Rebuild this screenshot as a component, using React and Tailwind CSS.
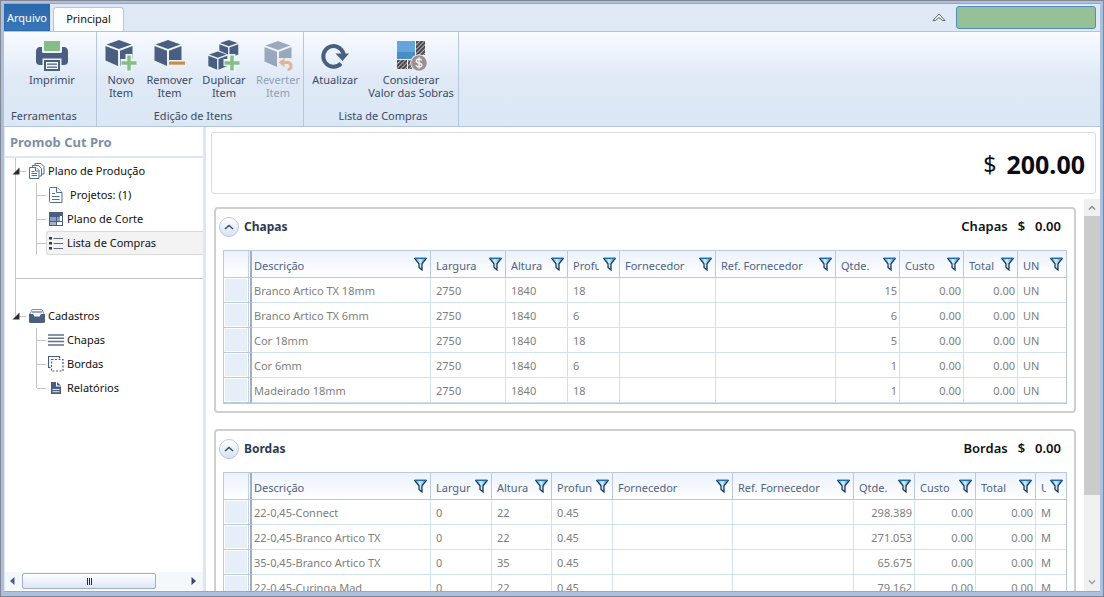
import React from "react";

const NAVY = "#4a5f80";
const GREEN = "#86bd86";

function Cube({ x = 0, y = 0, s = 1 }) {
  return (
    <g transform={`translate(${x} ${y}) scale(${s})`} fill={NAVY}>
      <path d="M14 0 L26.5 4.4 L14 9 L1.5 4.4Z" />
      <path d="M0.5 6 L13 10.8 V26 L0.5 20.6Z" />
      <path d="M27.5 6 L15 10.8 V26 L27.5 20.6Z" />
    </g>
  );
}

function Plus() {
  return (
    <g>
      <path d="M20.5 14h7v5h5v7h-5v6h-7v-6h-5v-7h5z" fill="#eef3fa" />
      <path d="M22.3 15.5h3.4v5.8h5.8v3.4h-5.8v5.8h-3.4v-5.8h-5.8v-3.4h5.8z" fill={GREEN} />
    </g>
  );
}

const svgProps = { width: 32, height: 32, viewBox: "0 0 32 32", "aria-hidden": true };

const PrinterIcon = () => (
  <svg {...svgProps}>
    <rect x="8" y="1" width="16" height="10" fill={GREEN} />
    <path d="M3 7h3v4.5q0 1.5 1.5 1.5h17q1.5 0 1.5-1.5V7h3q3 1 3 5v9q0 4-4 4h-2.500v-6.500H6.500V25H4q-4 0-4-4v-9q0-4 3-5z" fill={NAVY} />
    <path d="M9 21h14v9H9z" fill="#f3f7fc" stroke={NAVY} strokeWidth="2" />
    <path d="M11 24.200h10M11 27.200h10" stroke={NAVY} strokeWidth="1.200" />
  </svg>
);

const NewIcon = () => (
  <svg {...svgProps}>
    <Cube />
    <Plus />
  </svg>
);

const RemoveIcon = () => (
  <svg {...svgProps}>
    <Cube />
    <path d="M13 20h19v7H13z" fill="#e9f0f9" />
    <path d="M15 21.500h16v3.200H15z" fill="#c98f45" />
  </svg>
);

const DuplicateIcon = () => (
  <svg {...svgProps}>
    <Cube x={11} y={0} s={0.7} />
    <path d="M0 15 L10 10 L21 15 V30 H0z" fill="#eaf1f9" />
    <Cube x={0} y={11.500} s={0.7} />
    <Plus />
  </svg>
);

const RevertIcon = () => (
  <svg {...svgProps}>
    <g opacity="0.5">
      <Cube x={2} y={1} />
    </g>
    <path d="M17 18h14v13H17z" fill="#e3ebf6" />
    <path d="M20 22.500h5.500a3.600 3.600 0 0 1 0 7.200" fill="none" stroke="#e3b393" strokeWidth="2.800" />
    <path d="M16.500 22.500l6-4.500v9z" fill="#e3b393" />
  </svg>
);

const RefreshIcon = () => (
  <svg {...svgProps}>
    <path d="M22 23.500A10.300 10.300 0 1 1 24.300 13v3" fill="none" stroke={NAVY} strokeWidth="4" />
    <path d="M16.500 13.500h13.500l-6.500 7.500z" fill={NAVY} />
  </svg>
);

const LeftoverIcon = () => (
  <svg {...svgProps}>
    <defs>
      <pattern id="hatch" width="3" height="3" patternUnits="userSpaceOnUse" patternTransform="rotate(45)">
        <rect width="3" height="3" fill="#4a4650" />
        <rect width="1" height="3" fill="#b9b3b3" />
      </pattern>
    </defs>
    <rect x="2" y="1" width="18" height="18" fill="#64a5dd" />
    <rect x="2" y="12" width="18" height="7" fill="#4a8cc4" />
    <rect x="21" y="1" width="9" height="14" fill="url(#hatch)" />
    <rect x="2" y="20" width="10" height="9" fill="url(#hatch)" />
    <rect x="13" y="20" width="4" height="9" fill="url(#hatch)" />
    <circle cx="24" cy="23" r="8.800" fill="#eef3fa" />
    <circle cx="24" cy="23" r="7.800" fill="#9b9093" />
    <path d="M26.800 20.500q-.8-1.500-2.800-1.500-2.700 0-2.700 2 0 1.500 2.700 2t2.700 2q0 2-2.700 2-2.200 0-3-1.700M24 17.300v11.400" fill="none" stroke="#f1eff0" strokeWidth="1.500" />
  </svg>
);

function RibbonButton({ icon, lines, className, disabled }) {
  return (
    <button
      type="button"
      disabled={disabled}
      className={`flex flex-col items-center whitespace-nowrap text-[11px] leading-[13px] ${disabled ? "text-[#8fa0b8]" : "text-[#3b4a66]"} ${className}`}
    >
      {icon}
      <span className="mt-px block">
        {lines.map((l) => (
          <span key={l} className="block">{l}</span>
        ))}
      </span>
    </button>
  );
}

function RibbonGroup({ title, className, titleClass, children }) {
  return (
    <section className={`flex flex-col border-r border-[#b5c7de] ${className}`}>
      <div className="flex flex-1 pt-[8px]">{children}</div>
      <h2 className={`h-[17px] whitespace-nowrap pb-[1px] text-[11px] leading-[13px] text-[#3b4a66] ${titleClass}`}>{title}</h2>
    </section>
  );
}

const Funnel = () => (
  <svg width="13" height="14" viewBox="0 0 13 14" aria-hidden="true">
    <defs>
      <linearGradient id="funnel" x1="0" x2="1">
        <stop offset="0" stopColor="#4ba3dd" />
        <stop offset="0.45" stopColor="#d5eefb" />
        <stop offset="1" stopColor="#3d8fc9" />
      </linearGradient>
    </defs>
    <path d="M.8 1.500h11.400L8 6.800v6.200L5 10.500V6.800z" fill="url(#funnel)" stroke="#14304f" strokeWidth="1.200" />
    <path d="M.5 1.200h12" stroke="#2377b5" strokeWidth="1.400" />
  </svg>
);

function Grid({ label, columns, rows }) {
  return (
    <table aria-label={label} className="w-full table-fixed border-separate border-spacing-0 border border-[#b9cade] text-[11px] leading-[16px]">
      <colgroup>
        <col className="w-[28px]" />
        {columns.map((c) => (
          <col key={c.name} className={c.width} />
        ))}
      </colgroup>
      <thead>
        <tr className="h-[27px] bg-linear-to-b from-[#ecf2fc] to-white">
          <td className="border-b border-r-2 border-b-[#b9cade] border-r-[#9fb0c6] p-0">
            <div className="mr-[1px] h-[26px] border-r border-[#c3d1e4]" />
          </td>
          {columns.map((c, i) => (
            <th
              key={c.name}
              scope="col"
              className={`border-b border-[#b9cade] p-0 font-normal text-[#4f6384] ${i < columns.length - 1 ? "border-r" : ""} ${i === 0 ? "pl-[2px]" : "pl-[5px]"}`}
            >
              <div className="flex items-center gap-[4px] pr-[3px]">
                <span className="min-w-0 flex-1 overflow-hidden whitespace-nowrap pt-[3px] text-left">{c.name}</span>
                <button type="button" aria-label={`Filtrar ${c.name}`} className="shrink-0">
                  <Funnel />
                </button>
              </div>
            </th>
          ))}
        </tr>
      </thead>
      <tbody>
        {rows.map((r, ri) => (
          <tr key={ri} className="h-[25px]">
            <td className="border-b border-r-2 border-b-[#b9cade] border-r-[#9fb0c6] p-0">
              <div className="mr-[1px] h-[24px] border-r border-[#c3d1e4] p-[1px]">
                <div className="h-full bg-[#e6eefa]" />
              </div>
            </td>
            {r.map((v, i) => (
              <td
                key={i}
                className={`overflow-hidden whitespace-nowrap border-b border-[#cfe1f3] p-0 pt-[2px] text-[#7e7e7e] ${i < r.length - 1 ? "border-r" : ""} ${i === 0 ? "pl-[2px]" : "pl-[5px]"} ${columns[i].right ? "pr-[2px] text-right" : ""}`}
              >
                {v}
              </td>
            ))}
          </tr>
        ))}
      </tbody>
    </table>
  );
}

function Panel({ title, children }) {
  return (
    <section className="rounded-[4px] border-2 border-[#cfcfcf] bg-white px-[7px] pb-[7px]">
      <header className="-ml-[4px] flex h-[41px] items-center pb-[6px] text-[12px] font-bold">
        <button
          type="button"
          aria-label={`Recolher ${title}`}
          className="flex h-5 w-5 items-center justify-center rounded-full border border-[#b6c8df] bg-linear-to-b from-white to-[#d5e3f3]"
        >
          <svg width="10" height="6" viewBox="0 0 10 6" aria-hidden="true">
            <path d="M1 5l4-3.500L9 5" fill="none" stroke="#3b4a66" strokeWidth="1.500" />
          </svg>
        </button>
        <h2 className="ml-[5px] flex-1 text-[#2f3b56]">{title}</h2>
        <p className="flex gap-[10px] pr-[6px] font-semibold text-[#111] text-[13px]">
          <span>{title}</span>
          <span>$</span>
          <span>0.00</span>
        </p>
      </header>
      {children}
    </section>
  );
}

const CHAPAS_COLS = [
  { name: "Descrição", width: "" },
  { name: "Largura", width: "w-[75px]" },
  { name: "Altura", width: "w-[62px]" },
  { name: "Profu", width: "w-[52px]" },
  { name: "Fornecedor", width: "w-[96px]" },
  { name: "Ref. Fornecedor", width: "w-[120px]" },
  { name: "Qtde.", width: "w-[64px]", right: true },
  { name: "Custo", width: "w-[64px]", right: true },
  { name: "Total", width: "w-[54px]", right: true },
  { name: "UN", width: "w-[48px]" },
];

const CHAPAS = [
  ["Branco Artico TX 18mm", "2750", "1840", "18", "", "", "15", "0.00", "0.00", "UN"],
  ["Branco Artico TX 6mm", "2750", "1840", "6", "", "", "6", "0.00", "0.00", "UN"],
  ["Cor 18mm", "2750", "1840", "18", "", "", "5", "0.00", "0.00", "UN"],
  ["Cor 6mm", "2750", "1840", "6", "", "", "1", "0.00", "0.00", "UN"],
  ["Madeirado 18mm", "2750", "1840", "18", "", "", "1", "0.00", "0.00", "UN"],
];

const BORDAS_COLS = [
  { name: "Descrição", width: "" },
  { name: "Largur", width: "w-[61px]" },
  { name: "Altura", width: "w-[60px]" },
  { name: "Profun", width: "w-[61px]" },
  { name: "Fornecedor", width: "w-[120px]" },
  { name: "Ref. Fornecedor", width: "w-[121px]" },
  { name: "Qtde.", width: "w-[61px]", right: true },
  { name: "Custo", width: "w-[61px]", right: true },
  { name: "Total", width: "w-[60px]", right: true },
  { name: "U", width: "w-[30px]" },
];

const BORDAS = [
  ["22-0,45-Connect", "0", "22", "0.45", "", "", "298.389", "0.00", "0.00", "M"],
  ["22-0,45-Branco Artico TX", "0", "22", "0.45", "", "", "271.053", "0.00", "0.00", "M"],
  ["35-0,45-Branco Artico TX", "0", "35", "0.45", "", "", "65.675", "0.00", "0.00", "M"],
  ["22-0,45-Curinga Mad", "0", "22", "0.45", "", "", "79.162", "0.00", "0.00", "M"],
];

const PagesIcon = () => (
  <svg width="16" height="16" viewBox="0 0 16 16" fill="#fdfeff" stroke="#4f6f9c" aria-hidden="true">
    <path d="M6 3V.5h6l3 3V11h-2" />
    <path d="M3.500 5V2.500h6l3 3V13h-2" />
    <path d="M.5 4.500h6.500l3 3v8H.5z" />
    <path d="M6.500 4.500v3.500H10M2.500 8.500h3M2.500 10.500h5.500M2.500 12.500h5.500" />
  </svg>
);

const PageIcon = () => (
  <svg width="16" height="16" viewBox="0 0 16 16" fill="#fdfeff" stroke="#4f6f9c" aria-hidden="true">
    <path d="M2.500 .5h6.500l5 5v10H2.500q-1 0-1-1v-13q0-1 1-1z" />
    <path d="M8.500 .5v5H14M4 6.500h3M4 9.500h7.500M4 12.500h7.500" />
  </svg>
);

const CutPlanIcon = () => (
  <svg width="16" height="16" viewBox="0 0 16 16" aria-hidden="true">
    <rect x="1" y="1" width="14" height="14" fill={NAVY} />
    <rect x="2" y="6" width="6" height="4" fill="#8ba0bd" />
    <rect x="9" y="6" width="3" height="4" fill="#8ba0bd" />
    <rect x="12" y="5" width="2" height="5" fill="#fff" />
    <rect x="2" y="11" width="6" height="3" fill="#9fb0c8" />
    <rect x="9" y="11" width="5" height="3" fill="#fff" />
  </svg>
);

const ListIcon = () => (
  <svg width="16" height="16" viewBox="0 0 16 16" aria-hidden="true">
    <path d="M1 2h3v2.500H1zM1 7h3v2.500H1zM1 12h3v2.500H1z" fill="#33384f" />
    <path d="M5.500 3.500H15M5.500 8.500H15M5.500 13.500H15" stroke="#5b6e8d" strokeWidth="1.200" />
  </svg>
);

const DrawerIcon = () => (
  <svg width="16" height="16" viewBox="0 0 16 16" aria-hidden="true">
    <path d="M.5 7l2.500-5.500h10l2.500 5.500" fill="#f1f4f9" stroke="#8092ad" />
    <path d="M3 4h10" stroke={NAVY} />
    <path d="M0 6h4l1.500 2.500h5L12 6h4v7.500q0 1.500-1.500 1.500h-13Q0 15 0 13.500z" fill={NAVY} />
  </svg>
);

const SheetsIcon = () => (
  <svg width="16" height="16" viewBox="0 0 16 16" aria-hidden="true">
    <path d="M0 3h16M0 6.300h16M0 9.600h16M0 13h16" stroke="#5f708c" strokeWidth="1.500" />
  </svg>
);

const EdgesIcon = () => (
  <svg width="16" height="16" viewBox="0 0 16 16" fill="none" stroke={NAVY} aria-hidden="true">
    <path d="M2.500 11.500h-2V.5h11v2" strokeWidth="1.200" />
    <path d="M3.500 3.500h11.500v11.500H3.500z" strokeDasharray="2 1.500" strokeWidth="1.200" />
  </svg>
);

const ReportIcon = () => (
  <svg width="16" height="16" viewBox="0 0 16 16" aria-hidden="true">
    <path d="M3 2h5v4.500h5V14H3z" fill={NAVY} />
    <path d="M9 2l4 3.500H9z" fill={NAVY} />
    <path d="M4.500 9.500h7M4.500 11.700h7" stroke="#dfe6f0" />
  </svg>
);

function TreeRoot({ icon, children, line }) {
  return (
    <div className="flex h-6 items-center">
      <span className={`-ml-px h-3 w-px self-start ${line ? "bg-[#c4c4c4]" : ""}`} />
      <svg width="8" height="8" viewBox="0 0 8 8" className="-ml-1" aria-hidden="true">
        <path d="M7.500 .5v7H.5z" fill="#2e2a3c" />
      </svg>
      <span className="h-px w-[6px] bg-[#c4c4c4]" />
      <a href="#" className="ml-[3px] flex items-center gap-[3px] whitespace-nowrap text-[11px] text-[#111]">
        {icon}
        {children}
      </a>
    </div>
  );
}

function TreeItem({ icon, children, selected, corner, wide }) {
  return (
    <li className="flex h-6 items-center">
      <span className={`ml-[20px] w-px self-start bg-[#c4c4c4] ${corner ? "h-3" : "h-6"}`} />
      <span className="h-px w-[9px] bg-[#c4c4c4]" />
      <a
        href="#"
        className={`flex h-[24px] flex-1 items-center rounded-l-[3px] border border-r-0 whitespace-nowrap pl-[1px] text-[11px] text-[#111] ${selected ? "border-[#d9d9d9] bg-[#f3f3f3]" : "border-transparent"} ${wide ? "gap-[6px]" : "gap-[3px]"}`}
      >
        {icon}
        {children}
      </a>
    </li>
  );
}

export default function App() {
  return (
    <div className="flex h-screen flex-col overflow-hidden border border-[#85868f] bg-[#a9c1df] px-[3px] pt-[2px] pb-[4px] font-['Noto_Sans','Open_Sans',sans-serif]">
      <div className="flex min-h-0 flex-1 flex-col border-b border-[#93a9c9] bg-white">
        <nav className="flex h-[28px] shrink-0 items-end border-t border-[#8fa7c8] bg-[#dfe8f5]">
          <button type="button" className="h-[27px] w-[46px] border border-[#2b69aa] bg-linear-to-b from-[#2a68ab] to-[#3877b8] pt-[2px] text-center text-[11px] text-white">
            Arquivo
          </button>
          <button type="button" className="ml-[3px] h-[24px] w-[71px] rounded-t-[3px] border border-b-0 border-[#b5c7de] bg-[#fcfdff] text-[11px] text-[#111]">
            Principal
          </button>
          <button type="button" aria-label="Minimizar faixa" className="mr-[10px] mb-[9px] ml-auto">
            <svg width="14" height="9" viewBox="0 0 14 9" aria-hidden="true">
              <path d="M1 7.500L7 1l6 6.500h-2.500L7 4.500 3.500 7.500z" fill="#fff" stroke="#555c6b" strokeWidth="1" />
            </svg>
          </button>
          <div className="mr-[4px] mb-[2px] h-[23px] w-[140px] rounded-[3px] border border-[#4f8ec4] bg-[#97c097]" />
        </nav>

        <div className="flex h-[96px] shrink-0 border-t border-b border-[#b0c4dc] bg-linear-to-b from-[#f8fbff] via-[#dfe9f6] to-[#dbe7f5]">
          <RibbonGroup title="Ferramentas" className="w-[93px]" titleClass="pl-[7px]">
            <RibbonButton className="w-full pl-[4px]" icon={<PrinterIcon />} lines={["Imprimir"]} />
          </RibbonGroup>
          <RibbonGroup title="Edição de Itens" className="w-[207px]" titleClass="pr-[14px] text-center">
            <RibbonButton className="w-[48px]" icon={<NewIcon />} lines={["Novo", "Item"]} />
            <RibbonButton className="w-[49px]" icon={<RemoveIcon />} lines={["Remover", "Item"]} />
            <RibbonButton className="w-[60px]" icon={<DuplicateIcon />} lines={["Duplicar", "Item"]} />
            <RibbonButton className="w-[48px]" disabled icon={<RevertIcon />} lines={["Reverter", "Item"]} />
          </RibbonGroup>
          <RibbonGroup title="Lista de Compras" className="w-[155px]" titleClass="pl-[4px] text-center">
            <RibbonButton className="w-[62px]" icon={<RefreshIcon />} lines={["Atualizar"]} />
            <RibbonButton className="w-[90px]" icon={<LeftoverIcon />} lines={["Considerar", "Valor das Sobras"]} />
          </RibbonGroup>
        </div>

        <div className="flex min-h-0 flex-1">
          <aside className="flex w-[202px] shrink-0 flex-col border-r-[3px] border-l border-[#dce7f5]">
            <h1 className="h-[31px] border-b-2 border-[#dce7f5] pl-[5px] text-[13px] leading-[30px] font-bold text-[#7d90a8]">Promob Cut Pro</h1>
            <div className="ml-[10px] h-[121px] border-b border-l border-[#c4c4c4] pt-[1px]">
              <TreeRoot icon={<PagesIcon />}>Plano de Produção</TreeRoot>
              <ul>
                <TreeItem wide icon={<PageIcon />}>Projetos: (1)</TreeItem>
                <TreeItem icon={<CutPlanIcon />}>Plano de Corte</TreeItem>
                <TreeItem selected icon={<ListIcon />}>Lista de Compras</TreeItem>
              </ul>
            </div>
            <div className="ml-[10px] h-[25px] border-l border-[#c4c4c4]" />
            <div className="ml-[11px]">
              <TreeRoot line icon={<DrawerIcon />}>Cadastros</TreeRoot>
              <ul>
                <TreeItem icon={<SheetsIcon />}>Chapas</TreeItem>
                <TreeItem icon={<EdgesIcon />}>Bordas</TreeItem>
                <TreeItem corner icon={<ReportIcon />}>Relatórios</TreeItem>
              </ul>
            </div>
            <div className="mt-auto mb-px flex h-[18px] items-center bg-[#f4f8fd] px-[5px]">
              <button type="button" aria-label="Rolar para a esquerda">
                <svg width="5" height="8" viewBox="0 0 5 8" aria-hidden="true"><path d="M4.500 0v8L0 4z" fill="#41608c" /></svg>
              </button>
              <div className="ml-[7px] flex h-[16px] w-[134px] items-center justify-center gap-[1px] rounded-[2px] border border-[#9fb0c6] bg-linear-to-b from-white to-[#dbe6f4]">
                <span className="h-[7px] w-px bg-[#2e2a3c]" />
                <span className="h-[7px] w-px bg-[#2e2a3c]" />
                <span className="h-[7px] w-px bg-[#2e2a3c]" />
              </div>
              <button type="button" aria-label="Rolar para a direita" className="mr-[2px] ml-auto">
                <svg width="5" height="8" viewBox="0 0 5 8" aria-hidden="true"><path d="M.5 0v8L5 4z" fill="#2f4a75" /></svg>
              </button>
            </div>
          </aside>

          <main className="flex min-w-0 flex-1 flex-col pt-[5px]">
            <div className="mr-[4px] ml-[5px] flex h-[62px] shrink-0 items-center justify-end gap-[10px] rounded-[3px] border border-[#dcdcdc] pr-[10px] pt-[3px] text-[25px] text-[#0d0b14]">
              <span className="text-[23px]">$</span>
              <span className="font-bold">200.00</span>
            </div>
            <div className="mt-[5px] flex min-h-0 flex-1">
              <div className="min-w-0 flex-1 overflow-hidden pt-[8px] pr-[8px] pl-[8px]">
                <Panel title="Chapas">
                  <Grid label="Chapas" columns={CHAPAS_COLS} rows={CHAPAS} />
                </Panel>
                <div className="h-[16px]" />
                <Panel title="Bordas">
                  <Grid label="Bordas" columns={BORDAS_COLS} rows={BORDAS} />
                </Panel>
              </div>
              <div className="flex w-[16px] shrink-0 flex-col bg-[#f0f0f0]">
                <button type="button" aria-label="Rolar para cima" className="flex h-[17px] items-center justify-center">
                  <svg width="8" height="5" viewBox="0 0 8 5" aria-hidden="true"><path d="M1 4.500l3-3 3 3" fill="none" stroke="#8d8d98" strokeWidth="1.500" /></svg>
                </button>
                <div className="flex-1">
                  <div className="h-[78%] bg-[#cbcbcb]" />
                </div>
                <button type="button" aria-label="Rolar para baixo" className="flex h-[17px] items-center justify-center">
                  <svg width="8" height="5" viewBox="0 0 8 5" aria-hidden="true"><path d="M1 .5l3 3 3-3" fill="none" stroke="#a0a0a0" strokeWidth="1.500" /></svg>
                </button>
              </div>
            </div>
          </main>
        </div>
      </div>
    </div>
  );
}
